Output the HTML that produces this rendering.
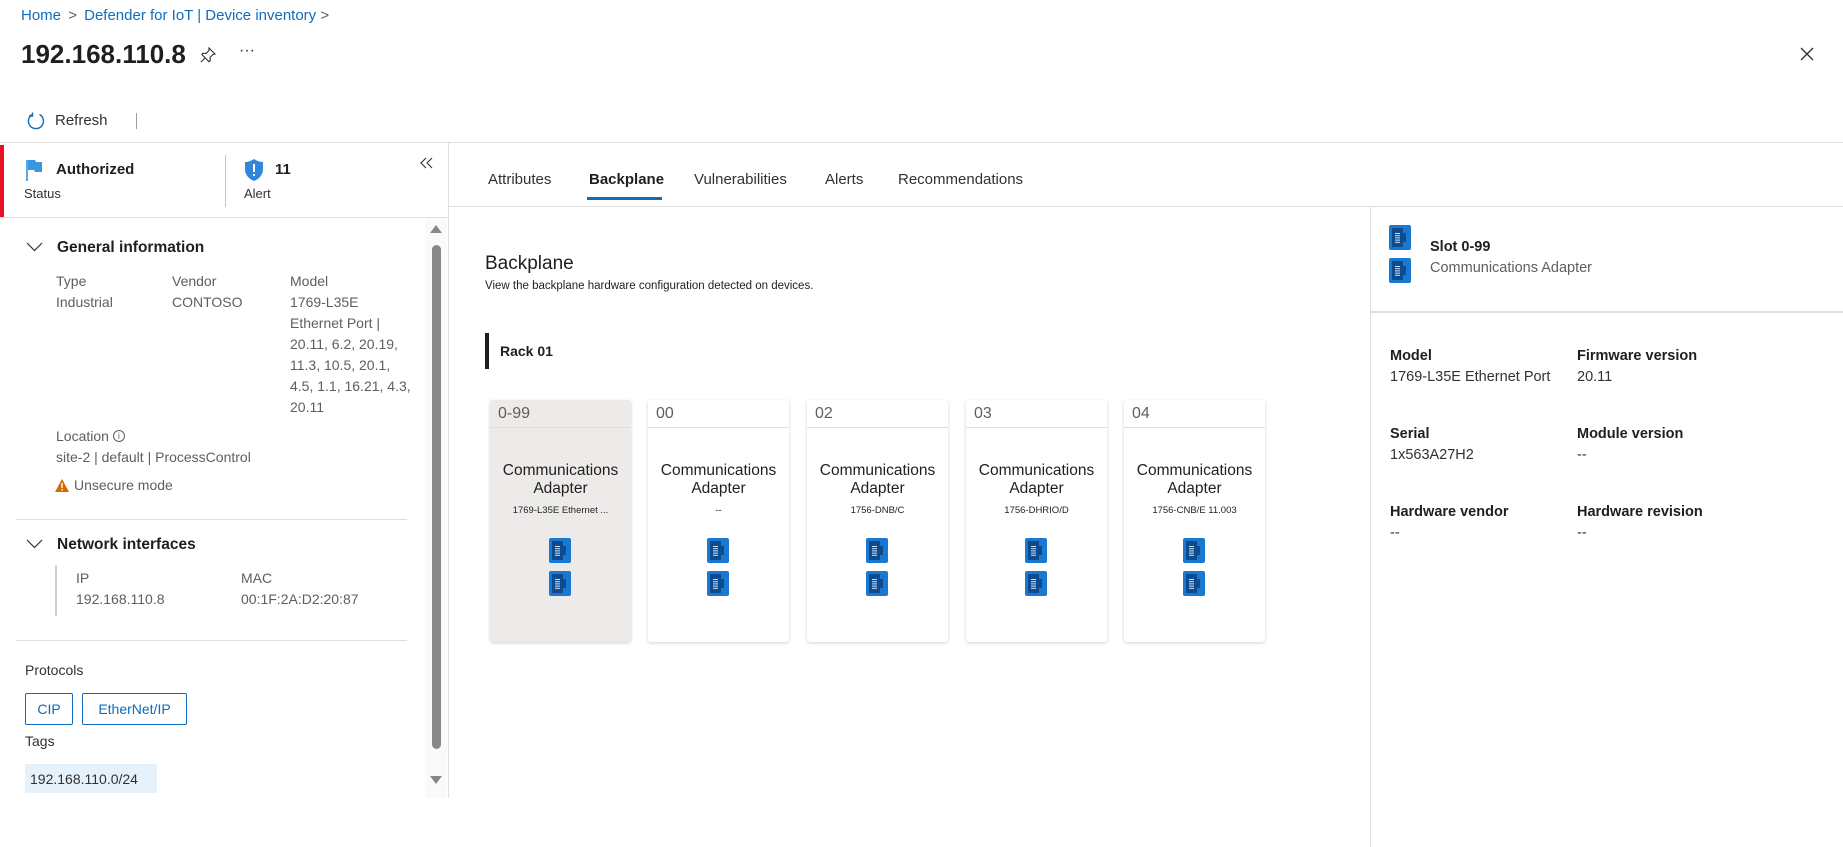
<!DOCTYPE html>
<html><head><meta charset="utf-8"><style>
*{margin:0;padding:0;box-sizing:border-box}
body{width:1843px;height:847px;position:relative;background:#fff;font-family:"Liberation Sans",sans-serif;color:#323130;overflow:hidden}
.a{position:absolute;white-space:nowrap}
.sb{font-weight:bold}
.l{position:absolute;background:#e1dfdd}
.card{position:absolute;top:400px;width:141px;height:242px;background:#fff;border-radius:3px;box-shadow:0 1px 3px rgba(0,0,0,.18)}
.card .h{height:28px;border-bottom:1px solid #e1dfdd;padding:5px 8px;font-size:16px;color:#605e5c}
.card .t{position:absolute;top:62px;width:100%;text-align:center;font-size:15.5px;line-height:18px;color:#201f1e}
.card .s{position:absolute;top:105px;width:100%;text-align:center;font-size:9.5px;color:#201f1e}
.card svg{position:absolute;left:59px}
</style></head><body>
<svg width="0" height="0" style="position:absolute"><defs>
<g id="port"><rect x="0" y="0" width="22" height="25" rx="2" fill="#1b78d0"/><path d="M3 3h11v5h3v9h-3v5H3z" fill="#0d4b8f"/><g fill="#cfe2f5"><rect x="6" y="8" width="5" height="1"/><rect x="6" y="10.2" width="5" height="1"/><rect x="6" y="12.4" width="5" height="1"/><rect x="6" y="14.6" width="5" height="1"/><rect x="6" y="16.8" width="5" height="1"/></g></g>
</defs></svg>

<div class="a" style="left:21px;top:7px;font-size:15px;color:#0f6cbd">Home <span style="color:#605e5c;margin:0 3px">&gt;</span> Defender for IoT | Device inventory <span style="color:#605e5c">&gt;</span></div>
<div class="a sb" style="left:21px;top:39px;font-size:26px;color:#201f1e">192.168.110.8</div>
<svg class="a" style="left:200px;top:47px" width="16" height="16" viewBox="0 0 16 16"><path d="M9 1l6 6-2 .5-3 3 .3 3-1.3 1.2L1.8 7.5 3 6.2l3 .3 3-3z M5 11l-4 4" fill="none" stroke="#323130" stroke-width="1.1"/></svg>
<div class="a" style="left:239px;top:42px;font-size:16px">···</div>
<svg class="a" style="left:1800px;top:47px" width="14" height="14"><path d="M1 1l12 12M13 1L1 13" stroke="#323130" stroke-width="1.3"/></svg>

<svg class="a" style="left:27px;top:112px" width="18" height="18" viewBox="0 0 18 18"><path d="M6 2.2A7.5 7.5 0 1 0 12.5 2.5" fill="none" stroke="#0f6cbd" stroke-width="1.4"/><path d="M5.5 0.5v3.5h-3.5" fill="none" stroke="#0f6cbd" stroke-width="1.4"/></svg>
<div class="a" style="left:55px;top:112px;font-size:15px">Refresh</div>
<div class="l" style="left:136px;top:113px;width:1px;height:16px;background:#a19f9d"></div>
<div class="l" style="left:0;top:142px;width:1843px;height:1px"></div>

<div class="a" style="left:0;top:145px;width:4px;height:72px;background:#e81123"></div>
<svg class="a" style="left:26px;top:160px" width="17" height="21"><rect x="0" y="0" width="2" height="21" fill="#5aa6e6"/><path d="M2 0h7l1 2h6v10H9l-1-2H2z" fill="#3a96dd"/></svg>
<div class="a sb" style="left:56px;top:161px;font-size:15px;color:#201f1e">Authorized</div>
<div class="a" style="left:24px;top:186px;font-size:13px">Status</div>
<div class="l" style="left:225px;top:155px;width:1px;height:52px;background:#c8c6c4"></div>
<svg class="a" style="left:244px;top:159px" width="20" height="22" viewBox="0 0 20 22"><path d="M10 0C7 2 4 3 1 3v7c0 6 4 10 9 12 5-2 9-6 9-12V3c-3 0-6-1-9-3z" fill="#2f86dc"/><rect x="9" y="5" width="2" height="8" fill="#fff"/><rect x="9" y="15" width="2" height="2" fill="#fff"/></svg>
<div class="a sb" style="left:275px;top:161px;font-size:15px;color:#201f1e">11</div>
<div class="a" style="left:244px;top:186px;font-size:13px">Alert</div>
<svg class="a" style="left:420px;top:157px" width="14" height="12"><path d="M6 1L1 6l5 5M12 1L7 6l5 5" fill="none" stroke="#323130" stroke-width="1.1"/></svg>
<div class="l" style="left:0;top:217px;width:448px;height:1px"></div>
<div class="l" style="left:448px;top:143px;width:1px;height:655px"></div>

<div class="a" style="left:425px;top:218px;width:22px;height:580px;background:#fafafa"></div>
<svg class="a" style="left:430px;top:225px" width="12" height="8"><path d="M6 0l6 8H0z" fill="#8a8886"/></svg>
<div class="a" style="left:432px;top:245px;width:9px;height:504px;background:#8a8886;border-radius:5px"></div>
<svg class="a" style="left:430px;top:776px" width="12" height="8"><path d="M0 0h12L6 8z" fill="#8a8886"/></svg>

<svg class="a" style="left:26px;top:242px" width="17" height="10"><path d="M1 1l7.5 7.5L16 1" fill="none" stroke="#323130" stroke-width="1.2"/></svg>
<div class="a" style="left:57px;top:239px;font-size:15.5px;color:#201f1e;font-weight:600">General information</div>
<div class="a" style="left:56px;top:271px;font-size:14px;line-height:21px;color:#605e5c">Type<br>Industrial</div>
<div class="a" style="left:172px;top:271px;font-size:14px;line-height:21px;color:#605e5c">Vendor<br>CONTOSO</div>
<div class="a" style="left:290px;top:271px;font-size:14px;line-height:21px;color:#605e5c">Model<br>1769-L35E<br>Ethernet Port |<br>20.11, 6.2, 20.19,<br>11.3, 10.5, 20.1,<br>4.5, 1.1, 16.21, 4.3,<br>20.11</div>
<div class="a" style="left:56px;top:426px;font-size:14px;line-height:21px;color:#605e5c">Location <span style="display:inline-block;width:12px;height:12px;border:1px solid #605e5c;border-radius:50%;font-size:9px;line-height:10px;text-align:center;vertical-align:2px">i</span><br>site-2 | default | ProcessControl</div>
<svg class="a" style="left:55px;top:479px" width="14" height="13"><path d="M7 0l7 13H0z" fill="#d36a00"/><rect x="6.3" y="4" width="1.4" height="5" fill="#fff"/><rect x="6.3" y="10" width="1.4" height="1.4" fill="#fff"/></svg>
<div class="a" style="left:74px;top:477px;font-size:14px;color:#605e5c">Unsecure mode</div>
<div class="l" style="left:16px;top:519px;width:391px;height:1px"></div>
<svg class="a" style="left:26px;top:539px" width="17" height="10"><path d="M1 1l7.5 7.5L16 1" fill="none" stroke="#323130" stroke-width="1.2"/></svg>
<div class="a" style="left:57px;top:536px;font-size:15.5px;color:#201f1e;font-weight:600">Network interfaces</div>
<div class="l" style="left:55px;top:565px;width:2px;height:51px;background:#d2d0ce"></div>
<div class="a" style="left:76px;top:568px;font-size:14px;line-height:21px;color:#605e5c">IP<br>192.168.110.8</div>
<div class="a" style="left:241px;top:568px;font-size:14px;line-height:21px;color:#605e5c">MAC<br>00:1F:2A:D2:20:87</div>
<div class="l" style="left:16px;top:640px;width:391px;height:1px"></div>
<div class="a" style="left:25px;top:662px;font-size:14px">Protocols</div>
<div class="a" style="left:25px;top:693px;width:48px;height:32px;border:1px solid #0f6cbd;border-radius:2px;color:#0f6cbd;font-size:14px;text-align:center;line-height:30px">CIP</div>
<div class="a" style="left:82px;top:693px;width:105px;height:32px;border:1px solid #0f6cbd;border-radius:2px;color:#0f6cbd;font-size:14px;text-align:center;line-height:30px">EtherNet/IP</div>
<div class="a" style="left:25px;top:733px;font-size:14px">Tags</div>
<div class="a" style="left:25px;top:764px;width:132px;height:29px;background:#e5f1fb;font-size:14px;line-height:30px;padding-left:5px">192.168.110.0/24</div>

<div class="a" style="left:488px;top:171px;font-size:15px">Attributes</div>
<div class="a sb" style="left:589px;top:171px;font-size:15px;color:#201f1e">Backplane</div>
<div class="a" style="left:587px;top:197px;width:75px;height:3px;background:#0f6cbd"></div>
<div class="a" style="left:694px;top:171px;font-size:15px">Vulnerabilities</div>
<div class="a" style="left:825px;top:171px;font-size:15px">Alerts</div>
<div class="a" style="left:898px;top:171px;font-size:15px">Recommendations</div>
<div class="l" style="left:449px;top:206px;width:1394px;height:1px"></div>

<div class="a" style="left:485px;top:253px;font-size:19px;color:#201f1e">Backplane</div>
<div class="a" style="left:485px;top:280px;font-size:11.5px;color:#201f1e">View the backplane hardware configuration detected on devices.</div>
<div class="a" style="left:485px;top:333px;width:4px;height:36px;background:#201f1e"></div>
<div class="a sb" style="left:500px;top:343px;font-size:14px;color:#201f1e">Rack 01</div>

<div class="card" style="left:490px;background:#edebe9"><div class="h">0-99</div><div class="t">Communications<br>Adapter</div><div class="s">1769-L35E Ethernet ...</div><svg style="top:138px" width="22" height="25"><use href="#port"/></svg><svg style="top:171px" width="22" height="25"><use href="#port"/></svg></div>
<div class="card" style="left:648px"><div class="h">00</div><div class="t">Communications<br>Adapter</div><div class="s">--</div><svg style="top:138px" width="22" height="25"><use href="#port"/></svg><svg style="top:171px" width="22" height="25"><use href="#port"/></svg></div>
<div class="card" style="left:807px"><div class="h">02</div><div class="t">Communications<br>Adapter</div><div class="s">1756-DNB/C</div><svg style="top:138px" width="22" height="25"><use href="#port"/></svg><svg style="top:171px" width="22" height="25"><use href="#port"/></svg></div>
<div class="card" style="left:966px"><div class="h">03</div><div class="t">Communications<br>Adapter</div><div class="s">1756-DHRIO/D</div><svg style="top:138px" width="22" height="25"><use href="#port"/></svg><svg style="top:171px" width="22" height="25"><use href="#port"/></svg></div>
<div class="card" style="left:1124px"><div class="h">04</div><div class="t">Communications<br>Adapter</div><div class="s">1756-CNB/E 11.003</div><svg style="top:138px" width="22" height="25"><use href="#port"/></svg><svg style="top:171px" width="22" height="25"><use href="#port"/></svg></div>

<div class="l" style="left:1370px;top:206px;width:1px;height:641px"></div>
<svg class="a" style="left:1389px;top:225px" width="22" height="25"><use href="#port"/></svg>
<svg class="a" style="left:1389px;top:258px" width="22" height="25"><use href="#port"/></svg>
<div class="a sb" style="left:1430px;top:239px;font-size:14.5px;color:#201f1e">Slot 0-99</div>
<div class="a" style="left:1430px;top:260px;font-size:14.5px;color:#605e5c">Communications Adapter</div>
<div class="l" style="left:1371px;top:311px;width:472px;height:2px"></div>
<div class="a" style="left:1390px;top:346px;font-size:14.5px;line-height:21px"><b style="color:#201f1e">Model</b><br>1769-L35E Ethernet Port</div>
<div class="a" style="left:1577px;top:346px;font-size:14.5px;line-height:21px"><b style="color:#201f1e">Firmware version</b><br>20.11</div>
<div class="a" style="left:1390px;top:424px;font-size:14.5px;line-height:21px"><b style="color:#201f1e">Serial</b><br>1x563A27H2</div>
<div class="a" style="left:1577px;top:424px;font-size:14.5px;line-height:21px"><b style="color:#201f1e">Module version</b><br>--</div>
<div class="a" style="left:1390px;top:502px;font-size:14.5px;line-height:21px"><b style="color:#201f1e">Hardware vendor</b><br>--</div>
<div class="a" style="left:1577px;top:502px;font-size:14.5px;line-height:21px"><b style="color:#201f1e">Hardware revision</b><br>--</div>
</body></html>
